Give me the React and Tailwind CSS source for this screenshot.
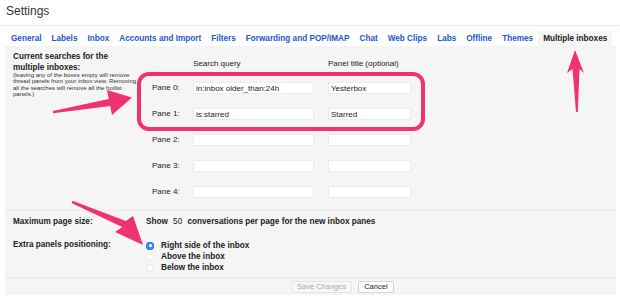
const tabs = [
  "General",
  "Labels",
  "Inbox",
  "Accounts and Import",
  "Filters",
  "Forwarding and POP/IMAP",
  "Chat",
  "Web Clips",
  "Labs",
  "Offline",
  "Themes",
]

const panes = [
  { label: "Pane 0:", query: "in:inbox older_than:24h", title: "Yesterbox" },
  { label: "Pane 1:", query: "is:starred", title: "Starred" },
  { label: "Pane 2:", query: "", title: "" },
  { label: "Pane 3:", query: "", title: "" },
  { label: "Pane 4:", query: "", title: "" },
]

const positions = ["Right side of the inbox", "Above the inbox", "Below the inbox"]

function Radio({ checked }) {
  return checked ? (
    <span className="flex h-[8px] w-[8px] items-center justify-center rounded-full bg-[#3b8ff0] shadow-[inset_0_0_0_1px_#2f7ad6]">
      <span className="h-[3px] w-[3px] rounded-full bg-white" />
    </span>
  ) : (
    <span className="h-[8px] w-[8px] rounded-full border border-[#e6e6e6] bg-white" />
  )
}

export default function App() {
  return (
    <div className="relative h-[304px] w-[620px] overflow-hidden bg-white font-['Liberation_Sans',Arial,sans-serif] text-[#222]">
      <div className="h-[26px] border-b border-[#e8e8e8] pl-[6px] pt-[4px] text-[12px] leading-[14px] text-[#333]">
        Settings
      </div>

      <div className="mt-[5px] flex h-[15px] pl-[6px] text-[8.2px] font-bold leading-[15px]">
        {tabs.map((tab) => (
          <span key={tab} className="whitespace-nowrap px-[5px] text-[#2357c6]">
            {tab}
          </span>
        ))}
        <span className="whitespace-nowrap bg-[#f5f5f5] px-[5px] text-[#222]">Multiple inboxes</span>
      </div>

      <div className="ml-[5px] mr-[4px] h-[249px] bg-[#f5f5f5]">
        <div className="flex border-b border-[#e9e9e9] pb-[5px] pl-[8px]">
          <div className="w-[139px] pt-[5px]">
            <div className="w-[126px] text-[8.2px] font-bold leading-[11px]">
              Current searches for the multiple inboxes:
            </div>
            <div className="-mt-[1px] whitespace-nowrap text-[6px] leading-[6.3px] text-[#333]">
              (leaving any of the boxes empty will remove
              <br />
              thread panels from your inbox view. Removing
              <br />
              all the searches will remove all the hotlist
              <br />
              panels.)
            </div>
          </div>

          <div className="pt-[11px] text-[8px]">
            <div className="flex h-[14px] items-center">
              <span className="w-[41px]" />
              <span className="w-[135px]">Search query</span>
              <span>Panel title (optional)</span>
            </div>
            <div className="mt-[4px]">
              {panes.map((pane) => (
                <div key={pane.label} className="flex h-[26px] items-center">
                  <span className="w-[41px]">{pane.label}</span>
                  <input
                    readOnly
                    value={pane.query}
                    className="h-[12px] w-[121px] border border-[#ececec] bg-white px-[2px] text-[8px] leading-[10px] text-[#222] outline-none"
                  />
                  <input
                    readOnly
                    value={pane.title}
                    className="ml-[14px] h-[12px] w-[83px] border border-[#ececec] bg-white px-[2px] text-[8px] leading-[10px] text-[#222] outline-none"
                  />
                </div>
              ))}
            </div>
          </div>
        </div>

        <div className="flex h-[22px] items-center pl-[8px] text-[8.2px] font-bold">
          <span className="w-[133px]">Maximum page size:</span>
          <span className="whitespace-nowrap">
            Show <span className="ml-[3px] mr-[3px] font-normal">50</span> conversations per page for the new inbox panes
          </span>
        </div>

        <div className="flex border-b border-[#e9e9e9] pb-[4px] pl-[8px] pt-[7px] text-[8.2px] font-bold">
          <span className="w-[133px] leading-[9px]">Extra panels positioning:</span>
          <div>
            {positions.map((pos, i) => (
              <div key={pos} className="flex h-[11px] items-center gap-[7px]">
                <Radio checked={i === 0} />
                <span className="leading-[11px]">{pos}</span>
              </div>
            ))}
          </div>
        </div>

        <div className="flex items-center gap-[6px] pl-[286px] pt-[3px] text-[7.5px]">
          <button className="h-[12px] rounded-[2px] border border-[#e4e4e4] bg-[#f7f7f7] px-[5px] leading-[10px] text-[#aaa]">
            Save Changes
          </button>
          <button className="h-[12px] rounded-[2px] border border-[#d6d6d6] bg-white px-[5px] leading-[10px] text-[#222]">
            Cancel
          </button>
        </div>
      </div>

      {/* annotation overlay */}
      <div className="absolute left-[137px] top-[72px] h-[59px] w-[288px] rounded-[12px] border-[4px] border-[#ef3370]" />
      <svg className="pointer-events-none absolute left-0 top-0" width="620" height="304" viewBox="0 0 620 304">
        <g fill="#ef3370">
          <polygon points="52.8,111 108.8,99 107,90 132,97.5 112,115 110.2,106 53.2,113.2" />
          <polygon points="575,50 584,73 579.5,69 577.8,112 576,112 572.5,69 567,73" />
          <polygon points="72.5,200.8 125.8,221 133,216 143,245 115,232 122.2,227 71.5,203" />
        </g>
      </svg>
    </div>
  )
}
